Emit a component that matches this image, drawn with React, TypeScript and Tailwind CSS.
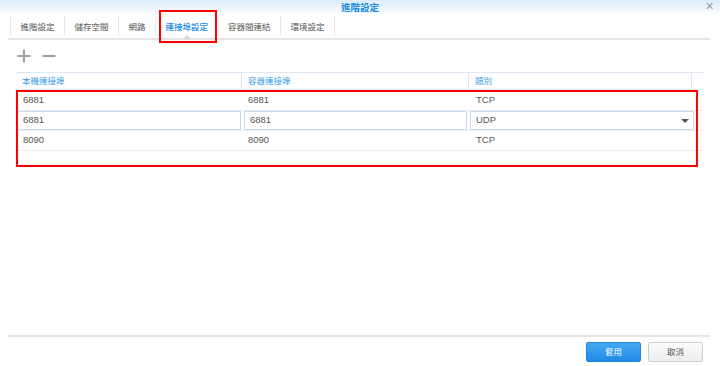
import React from 'react';

const tabs = ['進階設定', '儲存空間', '網路', '連接埠設定', '容器間連結', '環境設定'];

const rows = [
  { local: '6881', container: '6881', type: 'TCP' },
  { local: '6881', container: '6881', type: 'UDP', editing: true },
  { local: '8090', container: '8090', type: 'TCP' },
];

export default function App() {
  return (
    <div
      className="relative w-[720px] h-[366px] bg-white flex flex-col overflow-hidden"
      style={{ fontFamily: '"Liberation Sans", Arial, "Noto Sans CJK TC", sans-serif' }}
    >
      {/* edge of the window behind */}
      <div className="absolute top-0 left-0 w-[70px] h-[2px] bg-[#3a3a3a]" />

      {/* title bar */}
      <div className="relative h-[16px] shrink-0 flex items-center justify-center bg-gradient-to-b from-[#dcecfb] to-white">
        <span className="text-[9.5px] font-bold text-[#1a8be0] leading-none">進階設定</span>
        <span className="absolute right-[6px] top-[1px] text-[#9a9a9a] text-[11px] leading-none">✕</span>
      </div>

      {/* tabs */}
      <div className="mx-[8px] mr-[10px] h-[24px] shrink-0 border-b-2 border-[#e4e4e4] flex items-start">
        <div className="flex ml-[2px] mt-[1px] border-l border-[#e6e6e6]">
          {tabs.map((t, i) => {
            const active = i === 3;
            return (
              <div
                key={t}
                className={`relative h-[19px] px-[9.5px] pt-[1px] flex items-center border-r border-[#e6e6e6] text-[8.5px] leading-none ${
                  active ? 'text-[#1a8be0] font-medium' : 'text-[#555]'
                }`}
              >
                {t}
                {active && (
                  <>
                    <span className="absolute left-1/2 -translate-x-1/2 bottom-[-3px] w-0 h-0 border-l-[4px] border-r-[4px] border-b-[4px] border-l-transparent border-r-transparent border-b-[#d8d8d8]" />
                    <span className="absolute left-[3px] right-[1px] top-[-7px] bottom-[-7px] border-2 border-[#ff0000]" />
                  </>
                )}
              </div>
            );
          })}
        </div>
      </div>

      {/* toolbar */}
      <div className="h-[32px] shrink-0 flex items-center pl-[16px] gap-[10px]">
        <svg width="16" height="16" viewBox="0 0 16 16">
          <path d="M8 1.5v13M1.5 8h13" stroke="#a0a0a0" strokeWidth="2.2" />
        </svg>
        <svg width="14" height="16" viewBox="0 0 14 16">
          <path d="M0.5 8h13" stroke="#a0a0a0" strokeWidth="2.2" />
        </svg>
      </div>

      {/* grid */}
      <div className="ml-[16px] w-[687px] shrink-0">
        <div className="flex h-[18px] border-t border-b border-[#dde7f1] text-[8.5px] text-[#3a9ae6]">
          <div className="w-[226px] pl-[6px] flex items-center border-r border-[#dde7f1]">本機連接埠</div>
          <div className="w-[227px] pl-[6px] flex items-center border-r border-[#dde7f1]">容器連接埠</div>
          <div className="w-[223px] pl-[6px] flex items-center border-r border-[#dde7f1]">類別</div>
          <div className="flex-1" />
        </div>

        <div className="relative h-[77px] text-[9.5px] text-[#555]">
          {rows.map((r, i) =>
            r.editing ? (
              <div key={i} className="flex h-[20px] border-b border-[#eeeeee]">
                <div className="w-[226px] pl-[1px] pr-[1px]">
                  <div className="h-full border border-[#c9dced] flex items-center pl-[5px]">{r.local}</div>
                </div>
                <div className="w-[227px] pl-[2px] pr-[2px]">
                  <div className="h-full border border-[#c9dced] flex items-center pl-[5px]">{r.container}</div>
                </div>
                <div className="w-[225px] pl-[1px]">
                  <div className="h-full border border-[#c9dced] flex items-center pl-[5px] pr-[4px] justify-between">
                    <span>{r.type}</span>
                    <span className="w-0 h-0 border-l-[4px] border-r-[4px] border-t-[4px] border-l-transparent border-r-transparent border-t-[#555]" />
                  </div>
                </div>
              </div>
            ) : (
              <div key={i} className={`flex border-b border-[#eeeeee] ${i === 0 ? 'h-[21px]' : 'h-[20px]'}`}>
                <div className="w-[226px] pl-[7px] flex items-center">{r.local}</div>
                <div className="w-[227px] pl-[6px] flex items-center">{r.container}</div>
                <div className="w-[223px] pl-[7px] flex items-center">{r.type}</div>
              </div>
            )
          )}
          <div className="absolute left-0 top-0 w-[682px] h-[77px] border-2 border-[#ff0000] pointer-events-none" />
        </div>
      </div>

      <div className="flex-1" />

      {/* footer */}
      <div className="mx-[8px] mr-[10px] border-t-2 border-[#e6e6e6]" />
      <div className="h-[29px] shrink-0 flex items-start justify-end gap-[7px] pr-[17px] pt-[5px]">
        <button className="w-[55px] h-[20px] rounded-[2px] bg-gradient-to-b from-[#44a8f2] to-[#1f8ae6] border border-[#1f86dc] text-white text-[8.5px]">
          套用
        </button>
        <button className="w-[55px] h-[20px] rounded-[2px] bg-gradient-to-b from-[#fbfbfb] to-[#ececec] border border-[#cfcfcf] text-[#555] text-[8.5px]">
          取消
        </button>
      </div>
    </div>
  );
}
